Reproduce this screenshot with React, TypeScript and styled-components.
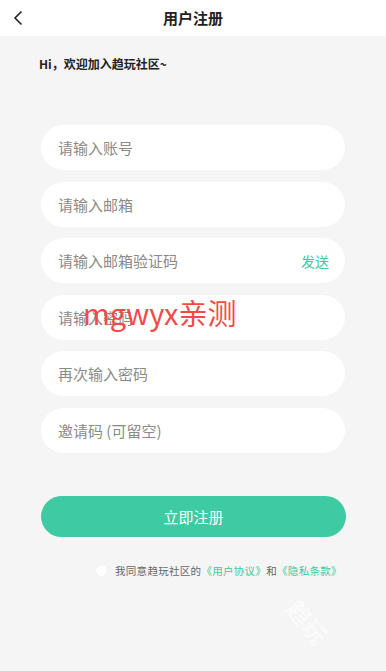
import { createGlobalStyle } from "styled-components";
import styled from "styled-components";

const GlobalStyle = createGlobalStyle`
  html, body {
    margin: 0;
    padding: 0;
    background: #f5f5f5;
    font-family: "Noto Sans CJK SC", "Noto Sans", sans-serif;
  }
`;

const fields = [
  { placeholder: "请输入账号" },
  { placeholder: "请输入邮箱" },
  { placeholder: "请输入邮箱验证码", action: "发送" },
  { placeholder: "请输入密码" },
  { placeholder: "再次输入密码" },
  { placeholder: "邀请码 (可留空)" },
];

const App = () => {
  return (
    <Page>
      <GlobalStyle />
      <Header>
        <BackButton>
          <svg width="10" height="16" viewBox="0 0 10 16">
            <path d="M8.5 1.5 L2 8 L8.5 14.5" fill="none" stroke="#222" strokeWidth="1.6" />
          </svg>
        </BackButton>
        <Title>用户注册</Title>
      </Header>

      <Greeting>Hi，欢迎加入趋玩社区~</Greeting>

      <Form>
        {fields.map(f => (
          <Field key={f.placeholder}>
            <Input placeholder={f.placeholder} />
            {f.action && <SendLink>{f.action}</SendLink>}
          </Field>
        ))}
      </Form>

      <SubmitButton>立即注册</SubmitButton>

      <Agreement>
        <Radio />
        <AgreeText>
          我同意趋玩社区的<Link>《用户协议》</Link>和<Link>《隐私条款》</Link>
        </AgreeText>
      </Agreement>

      <Watermark>mgwyx亲测</Watermark>
      <FaintMark>趋玩</FaintMark>
    </Page>
  );
};

export default App;

const Page = styled.div`
  position: relative;
  width: 386px;
  height: 671px;
  overflow: hidden;
  background: #f5f5f5;
`;

const Header = styled.div`
  position: relative;
  height: 36px;
  background: #fff;
  display: flex;
  align-items: center;
  justify-content: center;
`;

const BackButton = styled.div`
  position: absolute;
  left: 13px;
  top: 10px;
  display: flex;
`;

const Title = styled.div`
  font-size: 15px;
  font-weight: 700;
  color: #222;
  margin-top: -1px;
`;

const Greeting = styled.div`
  margin: 20px 0 0 39px;
  font-size: 12px;
  font-weight: 700;
  color: #222;
  line-height: 16px;
`;

const Form = styled.div`
  margin: 53px 41px 0 41px;
  display: flex;
  flex-direction: column;
  gap: 11.5px;
`;

const Field = styled.div`
  height: 45px;
  border-radius: 23px;
  background: #fff;
  display: flex;
  align-items: center;
  padding: 0 16px 0 17px;
`;

const Input = styled.input`
  flex: 1;
  min-width: 0;
  border: none;
  outline: none;
  background: transparent;
  font-family: "Noto Sans CJK SC", "Noto Sans", sans-serif;
  font-size: 15px;
  color: #333;
  padding: 0;
  &::placeholder {
    color: #8a8a8a;
  }
`;

const SendLink = styled.span`
  font-size: 14px;
  color: #3ec9a2;
`;

const SubmitButton = styled.button`
  display: block;
  margin: 43px 0 0 41px;
  width: 305px;
  height: 41px;
  border: none;
  border-radius: 21px;
  background: #3ecaa3;
  color: #fff;
  font-family: "Noto Sans CJK SC", "Noto Sans", sans-serif;
  font-size: 15px;
`;

const Agreement = styled.div`
  margin: 27px 0 0 96px;
  display: flex;
  align-items: center;
  gap: 8px;
`;

const Radio = styled.span`
  width: 11px;
  height: 11px;
  border-radius: 50%;
  background: #fff;
  box-shadow: 0 0 1px rgba(0, 0, 0, 0.1);
`;

const AgreeText = styled.span`
  font-size: 10.5px;
  color: #666;
  line-height: 14px;
  letter-spacing: 0.3px;
`;

const Link = styled.span`
  color: #3ec9a2;
`;

const Watermark = styled.div`
  position: absolute;
  left: 83px;
  top: 292px;
  font-family: "Noto Sans CJK SC", "Noto Sans", sans-serif;
  font-size: 29px;
  color: #f24a4a;
  line-height: 40px;
  pointer-events: none;
`;

const FaintMark = styled.div`
  position: absolute;
  left: 284px;
  top: 604px;
  font-size: 24px;
  font-weight: 700;
  color: rgba(255, 255, 255, 0.6);
  transform: rotate(50deg);
  pointer-events: none;
`;
